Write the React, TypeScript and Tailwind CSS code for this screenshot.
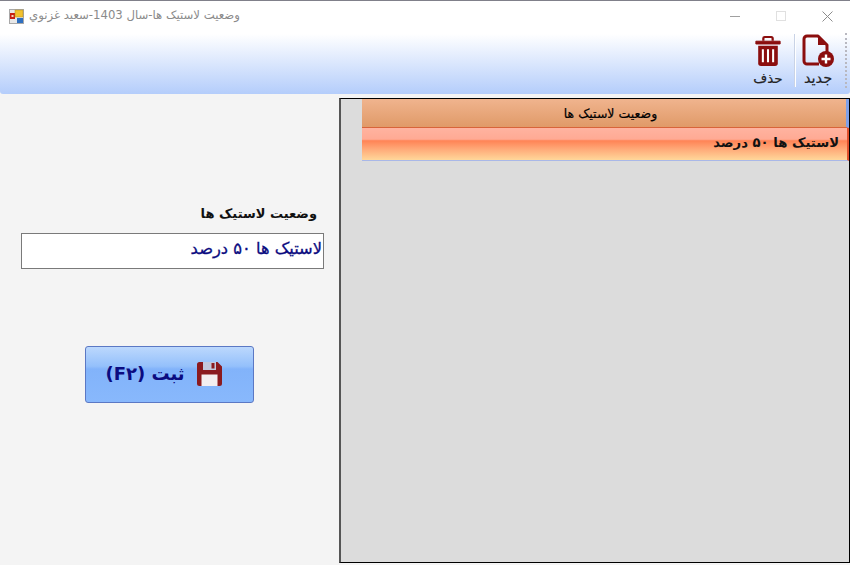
const font = { fontFamily: '"DejaVu Sans", sans-serif' };

function NewIcon() {
  return (
    <svg width="34" height="34" viewBox="0 0 34 34" fill="none">
      <path d="M18 30H6a3 3 0 0 1-3-3V5a3 3 0 0 1 3-3h11l9 9v7" stroke="#8b0e0e" strokeWidth="3" strokeLinejoin="round" />
      <path d="M17 2v9h9z" fill="#8b0e0e" />
      <circle cx="25" cy="25" r="8" fill="#8b0e0e" />
      <path d="M25 20.500v9M20.500 25h9" stroke="#fff" strokeWidth="2.400" />
    </svg>
  );
}

function TrashIcon() {
  return (
    <svg width="28" height="34" viewBox="0 0 30 34" fill="none">
      <path d="M10 6V3.500A1.500 1.500 0 0 1 11.500 2h7A1.500 1.500 0 0 1 20 3.500V6" stroke="#8b0e0e" strokeWidth="2.400" />
      <path d="M2 6.500h26v3H2z" fill="#8b0e0e" stroke="#8b0e0e" strokeWidth="1" strokeLinejoin="round" />
      <path d="M4.500 11.500h21V30a3 3 0 0 1-3 3h-15a3 3 0 0 1-3-3z" fill="#8b0e0e" />
      <path d="M9.500 15v14M15 15v14M20.500 15v14" stroke="#fff" strokeWidth="2.200" />
    </svg>
  );
}

function SaveIcon() {
  return (
    <svg width="26" height="26" viewBox="0 0 26 26">
      <path d="M2.500 1h18L25 5.500v17a2.500 2.500 0 0 1-2.500 2.500h-20A2.500 2.500 0 0 1 0 22.500v-19A2.500 2.500 0 0 1 2.500 1z" fill="#8b1a1f" />
      <rect x="6" y="1" width="13" height="8" fill="#c2c9de" />
      <rect x="14.500" y="2" width="3" height="5.500" fill="#8b1a1f" />
      <rect x="4.500" y="13.500" width="16" height="11.500" fill="#f3eef0" />
    </svg>
  );
}

function AppIcon() {
  return (
    <svg width="15" height="15" viewBox="0 0 15 15">
      <rect x="0.500" y="0.500" width="14" height="14" fill="#e8e8e8" stroke="#a8a8a8" />
      <rect x="1" y="4" width="5" height="6" fill="#c81e12" />
      <rect x="2.500" y="6" width="2" height="2" fill="#f4d8c0" />
      <rect x="6" y="1" width="8" height="7" fill="#f2c12e" stroke="#b08a20" strokeWidth="0.500" />
      <rect x="8" y="9" width="6" height="5" fill="#2f6fc0" />
    </svg>
  );
}

export default function App() {
  return (
    <div className="w-[850px] h-[565px] flex flex-col overflow-hidden bg-[#f4f4f4]" style={font}>
      <div className="h-[94px] shrink-0 flex flex-col border-t border-[#80808a] rounded-b-[3px] bg-[linear-gradient(to_bottom,#ffffff_0px,#ffffff_33px,#b4cdfb_100%)]">
        <div className="h-[30px] shrink-0 flex items-center pl-[9px]">
          <AppIcon />
          <span dir="rtl" className="ml-[5px] text-[11.700px] text-[#8a8a8a] leading-none">
            وضعیت لاستیک ها-سال 1403-سعید غزنوي
          </span>
          <div className="ml-auto flex items-center">
            <div className="w-[46px] flex justify-center">
              <div className="w-[10px] h-px bg-[#a0a0a0]" />
            </div>
            <div className="w-[46px] flex justify-center">
              <div className="w-[10px] h-[10px] border border-[#e0e0e0]" />
            </div>
            <div className="w-[46px] flex justify-center">
              <svg width="11" height="11" viewBox="0 0 11 11">
                <path d="M0.500 0.500l10 10M10.500 0.500l-10 10" stroke="#8c8c8c" strokeWidth="1" />
              </svg>
            </div>
          </div>
        </div>
        <div className="flex-1 flex justify-end items-stretch pb-[4px] pr-[3px]">
          <div className="w-[52px] flex flex-col items-center">
            <div className="h-[34px] mt-[3px]"><TrashIcon /></div>
            <span className="mt-[2px] text-[13.500px] leading-[16px] text-[#222] [-webkit-text-stroke:0.2px]">حذف</span>
          </div>
          <div className="w-[2px] my-[3px] bg-[#c9d3e6] border-r border-white" />
          <div className="w-[44px] mr-[5px] flex flex-col items-center">
            <div className="h-[34px] mt-[3px]"><NewIcon /></div>
            <span className="mt-[2px] text-[14.500px] leading-[16px] text-[#222] [-webkit-text-stroke:0.2px]">جدید</span>
          </div>
          <div className="w-[2px] my-[2px] border-l-2 border-dotted border-[#b8b8c0]" />
        </div>
      </div>

      <div className="flex-1 flex min-h-0 pt-[4px] pb-[2px]">
        <div className="w-[339px] shrink-0 flex flex-col pl-[21px] pr-[14px]">
          <div dir="rtl" className="mt-[105px] h-[22px] pr-[8px] text-[13px] font-bold leading-[22px] text-[#111]">
            وضعیت لاستیک ها
          </div>
          <div dir="rtl" className="mt-[8px] h-[36px] w-[303px] border border-[#7a7a7a] bg-white px-[1px] text-[16.300px] leading-[30px] text-[#0b0b80] [-webkit-text-stroke:0.3px]">
            لاستیک ها ۵۰ درصد
          </div>
          <button className="mt-[77px] ml-[64px] w-[169px] h-[57px] rounded-[3px] border border-[#5b78c4] bg-[linear-gradient(to_bottom,#bcd8fd_0%,#94c0fb_35%,#82b3fa_40%,#88b8fc_100%)] flex items-center justify-center gap-[12px] pr-[11px] pb-[2px]">
            <span dir="rtl" className="font-bold text-[18px] text-[#0b0b80] leading-none">ثبت (F۲)</span>
            <SaveIcon />
          </button>
        </div>

        <div className="w-[511px] shrink-0 border border-black border-l-2 border-l-[#555] bg-[#dcdcdc] flex flex-col">
          <div className="ml-[21px] h-[29px] pt-[2px] pl-[13px] flex items-center justify-center border-b border-[#d8643a] border-r-[3px] border-r-[#7fa0e8] bg-[linear-gradient(to_bottom,#f0b48e,#e09a68)] text-[12.500px] text-black [-webkit-text-stroke:0.2px]">
            وضعیت لاستیک ها
          </div>
          <div dir="rtl" className="ml-[21px] h-[33px] pr-[8px] pb-[2px] flex items-center border-b border-b-[#a9b8e8] border-r-2 border-r-[#e0522f] bg-[linear-gradient(to_bottom,#ffb3a0_0%,#ffaa94_35%,#ff8456_40%,#ffa877_65%,#ffd79a_100%)] text-[13.200px] font-bold text-[#111]">
            لاستیک ها ۵۰ درصد
          </div>
        </div>
      </div>
    </div>
  );
}
